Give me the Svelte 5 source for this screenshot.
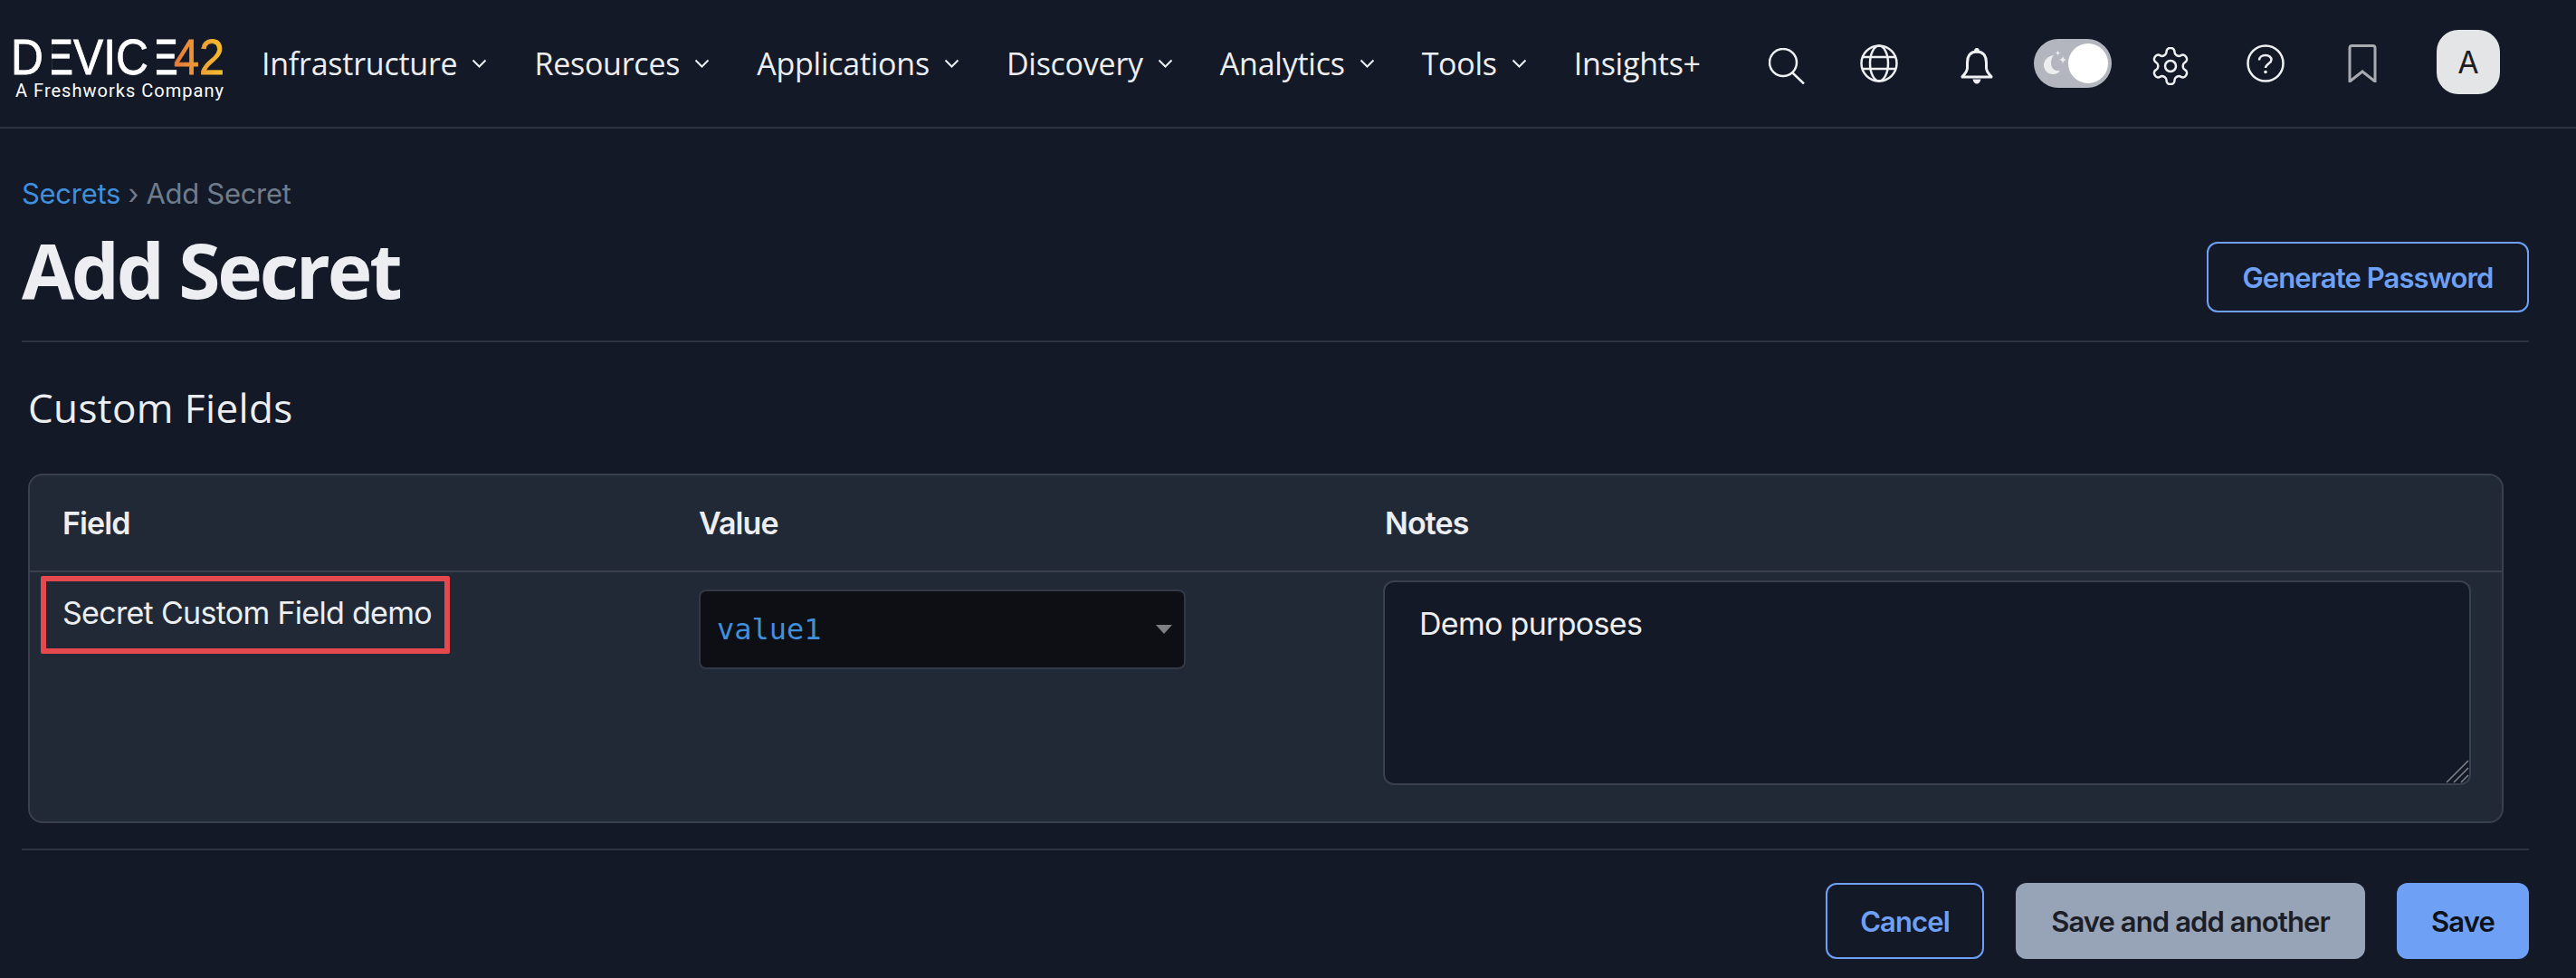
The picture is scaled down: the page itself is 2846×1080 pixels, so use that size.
<script>
  const navItems = [
    { label: 'Infrastructure', caret: true },
    { label: 'Resources', caret: true },
    { label: 'Applications', caret: true },
    { label: 'Discovery', caret: true },
    { label: 'Analytics', caret: true },
    { label: 'Tools', caret: true },
    { label: 'Insights+', caret: false }
  ];

  // four point sparkle for the dark mode toggle
  const star = (x, y, r) =>
    `M${x} ${y - r}Q${x} ${y} ${x + r} ${y}Q${x} ${y} ${x} ${y + r}Q${x} ${y} ${x - r} ${y}Q${x} ${y} ${x} ${y - r}Z`;
</script>

<div class="page">
  <header class="topbar">
    <a class="logo" href="#top" aria-label="Device42">
      <svg width="240" height="110" viewBox="0 0 240 110" aria-hidden="true">
        <defs>
          <linearGradient id="d42-grad" gradientUnits="userSpaceOnUse" x1="182" x2="238" y1="0" y2="0">
            <stop offset="0" stop-color="#e5793c" />
            <stop offset="1" stop-color="#f6c02c" />
          </linearGradient>
        </defs>
        <text class="wordmark" x="2" y="67" textLength="185" lengthAdjust="spacingAndGlyphs">DEVICE</text>
        <!-- the E has no stem in the real mark -->
        <rect x="40" y="24" width="7" height="46" fill="#131927" />
        <rect x="156" y="24" width="7" height="46" fill="#131927" />
        <text class="wordmark num" x="182" y="67" textLength="56" lengthAdjust="spacingAndGlyphs">42</text>
        <text class="tagline" x="7" y="92" textLength="230">A Freshworks Company</text>
      </svg>
    </a>

    <nav class="nav">
      {#each navItems as item}
        <a class="nav-item" href="#top">
          <span>{item.label}</span>
          {#if item.caret}
            <svg width="17" height="10" viewBox="0 0 17 10" aria-hidden="true">
              <path d="M1.5 1.5 8.5 8.5 15.5 1.5" fill="none" stroke="currentColor" stroke-width="2" />
            </svg>
          {/if}
        </a>
      {/each}
    </nav>

    <div class="tools">
      <svg class="ic low" width="40" height="40" viewBox="0 0 40 40" aria-hidden="true">
        <circle cx="16" cy="16" r="15" />
        <path d="M26 27 39 39.500" />
      </svg>
      <svg class="ic globe" width="42" height="42" viewBox="0 0 42 42" aria-hidden="true">
        <circle cx="21" cy="21" r="19.500" />
        <ellipse cx="21" cy="21" rx="10" ry="19.500" />
        <path d="M3 14H39M3 27H39" />
      </svg>
      <svg class="ic bell low" width="38" height="40" viewBox="-1 0 38 40" aria-hidden="true">
        <circle class="solid" cx="18" cy="2.800" r="2.800" />
        <path d="M18 4C10 4 7.500 10 7.500 16V22C7.500 26 5 28.500 2 31.500V32H34V31.500C31 28.500 28.500 26 28.500 22V16C28.500 10 26 4 18 4Z" stroke-linejoin="round" />
        <path class="solid" d="M13.500 34.500H22.500C22 37.500 20 39.500 18 39.500S14 37.500 13.500 34.500Z" />
      </svg>
      <div class="theme-toggle">
        <svg width="38" height="54" viewBox="0 0 38 54" aria-hidden="true">
          <path d="M22 18C15 19 11 24 11 29C11 35 16 39 21 39C25 39 28 37 29 35C24 36 19 33 19 27C19 23 20 20 22 18Z" fill="#eceef0" />
          <path d={star(26.5, 15.5, 3.5) + star(32, 23, 5)} fill="#eceef0" />
        </svg>
        <span class="knob"></span>
      </div>
      <svg class="ic gear low" width="42" height="42" viewBox="1.500 1.500 21 21" aria-hidden="true">
        <path d="M12.220 2h-.44a2 2 0 0 0-2 2v.18a2 2 0 0 1-1 1.730l-.43.25a2 2 0 0 1-2 0l-.15-.08a2 2 0 0 0-2.730.73l-.22.38a2 2 0 0 0 .73 2.730l.15.1a2 2 0 0 1 1 1.720v.51a2 2 0 0 1-1 1.740l-.15.09a2 2 0 0 0-.73 2.730l.22.38a2 2 0 0 0 2.730.73l.15-.08a2 2 0 0 1 2 0l.43.25a2 2 0 0 1 1 1.730V20a2 2 0 0 0 2 2h.44a2 2 0 0 0 2-2v-.18a2 2 0 0 1 1-1.730l.43-.25a2 2 0 0 1 2 0l.15.08a2 2 0 0 0 2.730-.73l.22-.39a2 2 0 0 0-.73-2.730l-.15-.08a2 2 0 0 1-1-1.740v-.5a2 2 0 0 1 1-1.740l.15-.09a2 2 0 0 0 .73-2.730l-.22-.38a2 2 0 0 0-2.730-.73l-.15.08a2 2 0 0 1-2 0l-.43-.25a2 2 0 0 1-1-1.730V4a2 2 0 0 0-2-2z" />
        <circle cx="12" cy="12" r="3" />
      </svg>
      <svg class="ic help" width="42" height="42" viewBox="0 0 42 42" aria-hidden="true">
        <circle cx="21" cy="21" r="19.500" />
        <path d="M14 17.500C14 14 17 12 21 12C25 12 27.500 14.500 27.500 17C27.500 21 21 21.500 21 26" />
        <circle class="solid" cx="21" cy="30.500" r="1.800" />
      </svg>
      <svg class="ic bookmark" width="32" height="42" viewBox="0 0 32 42" aria-hidden="true">
        <path d="M2 41V4C2 2.500 3 1.500 4.500 1.500H27.500C29 1.500 30 2.500 30 4V41L16 30Z" />
      </svg>
      <button class="avatar">A</button>
    </div>
  </header>

  <main class="content">
    <div class="crumbs">
      <a href="#top">Secrets</a> <span class="sep">›</span> Add Secret
    </div>

    <div class="title-row">
      <h1>Add Secret</h1>
      <button class="btn btn-outline gen">Generate Password</button>
    </div>

    <h2>Custom Fields</h2>

    <section class="table">
      <div class="cell head">Field</div>
      <div class="cell head head-value">Value</div>
      <div class="cell head head-notes">Notes</div>

      <div class="cell field-name">
        Secret Custom Field demo
        <span class="highlight"></span>
      </div>
      <div class="cell">
        <div class="select">
          <span>value1</span>
          <svg width="18" height="10" viewBox="0 0 18 10" aria-hidden="true">
            <path d="M0 0H18L9 10Z" fill="#7d7f83" />
          </svg>
        </div>
      </div>
      <div class="cell notes-cell">
        <div class="notes">
          <textarea readonly>Demo purposes</textarea>
          <svg class="grip" width="26" height="26" viewBox="0 0 26 26" aria-hidden="true">
            <path d="M1 25 25 1M9 25 25 9M17 25 25 17" />
          </svg>
        </div>
      </div>
    </section>

    <footer class="actions">
      <button class="btn btn-outline">Cancel</button>
      <button class="btn btn-grey">Save and add another</button>
      <button class="btn btn-primary">Save</button>
    </footer>
  </main>
</div>

<style>
  :global(body) {
    margin: 0;
    background: #131927;
  }

  .page {
    width: 2846px;
    height: 1080px;
    overflow: hidden;
    background: #131927;
    color: #eceef1;
    font-family: "Open Sans", sans-serif;
  }

  .topbar {
    box-sizing: border-box;
    height: 142px;
    border-bottom: 2px solid #2f3341;
    display: flex;
    align-items: center;
    padding: 0 84px 0 10px;
  }

  .logo {
    display: block;
    width: 279px;
    height: 110px;
  }

  .wordmark {
    font-family: "Liberation Sans", sans-serif;
    font-size: 55px;
    stroke-width: 0.8;
    fill: #fff;
    stroke: #fff;
  }

  .wordmark.num {
    fill: url(#d42-grad);
    stroke: url(#d42-grad);
  }

  .tagline {
    font-family: "Roboto", sans-serif;
    font-size: 20px;
    font-weight: 400;
    fill: #fff;
  }

  .nav {
    display: flex;
    align-items: center;
    gap: 52px;
  }

  .nav-item {
    display: flex;
    align-items: center;
    gap: 16px;
    font-size: 34px;
    letter-spacing: -0.25px;
    color: #eceef1;
    text-decoration: none;
  }

  .tools {
    display: flex;
    align-items: center;
    margin-left: auto;
  }

  .ic {
    fill: none;
    stroke: #eef0f2;
    stroke-width: 2.500;
    flex: none;
  }

  .ic .solid {
    fill: #eef0f2;
    stroke: none;
  }

  .ic.low {
    margin-top: 6px;
  }

  .ic.globe {
    margin-left: 61px;
  }

  .ic.bell {
    margin-left: 68px;
    stroke-width: 3;
  }

  .ic.gear {
    margin-left: 44px;
    stroke-width: 1.250;
  }

  .ic.help {
    margin-left: 63px;
  }

  .ic.bookmark {
    margin-left: 70px;
    stroke: #a8aaaf;
    stroke-width: 3;
  }

  .theme-toggle {
    box-sizing: border-box;
    width: 86px;
    height: 54px;
    margin-left: 44px;
    border-radius: 27px;
    background: #b3b6be;
    display: flex;
    align-items: center;
    padding-right: 4px;
  }

  .knob {
    width: 44px;
    height: 44px;
    border-radius: 50%;
    background: #fff;
  }

  .avatar {
    width: 70px;
    height: 71px;
    margin: 0 0 3px 66px;
    border: 0;
    border-radius: 24px;
    background: #e4e5e7;
    color: #1c1e24;
    font-family: "Inter", sans-serif;
    font-size: 34px;
    font-weight: 400;
    padding: 0;
  }

  .content {
    padding: 0 52px 0 24px;
  }

  .crumbs {
    margin-top: 50px;
    font-family: "Inter", sans-serif;
    font-size: 31px;
    line-height: 44px;
    letter-spacing: -0.3px;
    color: #6f7c8c;
  }

  .crumbs a {
    color: #3f90dc;
    text-decoration: none;
  }

  .title-row {
    display: flex;
    align-items: flex-start;
    justify-content: space-between;
    height: 142px;
    box-sizing: border-box;
    border-bottom: 2px solid #2f3341;
  }

  h1 {
    margin: 17px 0 0;
    font-size: 84px;
    font-weight: 700;
    line-height: 90px;
    letter-spacing: -3.200px;
    color: #eceef1;
  }

  h2 {
    margin: 44px 0 0 7px;
    font-size: 44px;
    font-weight: 500;
    line-height: 56px;
    letter-spacing: 0.400px;
    color: #eceef1;
  }

  .btn {
    box-sizing: border-box;
    height: 84px;
    border-radius: 12px;
    border: 2px solid transparent;
    font-family: "Inter", sans-serif;
    font-size: 31px;
    font-weight: 600;
    letter-spacing: -0.900px;
    padding: 0;
  }

  .btn-outline {
    background: transparent;
    border-color: #6ea1f5;
    color: #6ea1f5;
    width: 175px;
  }

  .btn-outline.gen {
    width: 356px;
    height: 78px;
    margin-top: 31px;
  }

  .btn-grey {
    background: #97a3b6;
    color: #1b1e26;
    width: 386px;
  }

  .btn-primary {
    background: #6ea1f5;
    color: #0e1118;
    width: 146px;
  }

  .table {
    box-sizing: border-box;
    width: 2735px;
    height: 386px;
    margin: 45px 0 0 7px;
    display: grid;
    grid-template-columns: 705px 754px 1272px;
    grid-template-rows: 107px 1fr;
    background: #222936;
    border: 2px solid #3a404d;
    border-radius: 16px;
  }

  .cell {
    position: relative;
    padding: 0 36px;
    font-family: "Inter", sans-serif;
    font-size: 34px;
    letter-spacing: -0.700px;
  }

  .head {
    display: flex;
    align-items: center;
    border-bottom: 2px solid #3a404d;
    font-weight: 600;
    letter-spacing: -0.900px;
  }

  .head-value {
    padding-left: 34px;
  }

  .head-notes {
    padding-left: 38px;
  }

  .field-name {
    padding-top: 23px;
    line-height: 44px;
  }

  .highlight {
    position: absolute;
    left: 12px;
    top: 4px;
    width: 452px;
    height: 86px;
    box-sizing: border-box;
    border: 6px solid #e5484d;
    border-radius: 2px;
  }

  .select {
    box-sizing: border-box;
    margin-top: 21px;
    height: 84px;
    width: 534px;
    background: #0d0f14;
    border-radius: 6px;
    box-shadow: 0 0 0 2px #333946;
    display: flex;
    align-items: center;
    justify-content: space-between;
    padding: 0 13px 0 18px;
    font-family: "DejaVu Sans Mono", monospace;
    font-size: 32px;
    letter-spacing: 0;
    color: #3f90dc;
  }

  .notes-cell {
    padding-right: 34px;
  }

  .notes {
    position: relative;
    margin-top: 9px;
    height: 226px;
  }

  textarea {
    display: block;
    box-sizing: border-box;
    width: 100%;
    height: 100%;
    resize: none;
    outline: none;
    background: #131927;
    border: 2px solid #3a404d;
    border-radius: 12px;
    padding: 24px 38px;
    font-family: "Inter", sans-serif;
    font-size: 34px;
    letter-spacing: -0.700px;
    line-height: 44px;
    color: #eceef1;
  }

  .grip {
    position: absolute;
    right: 2px;
    bottom: 2px;
    fill: none;
    stroke: #85878c;
    stroke-width: 1.500;
  }

  .actions {
    display: flex;
    justify-content: flex-end;
    gap: 35px;
    margin-top: 28px;
    padding-top: 36px;
    border-top: 2px solid #2f3341;
  }
</style>
